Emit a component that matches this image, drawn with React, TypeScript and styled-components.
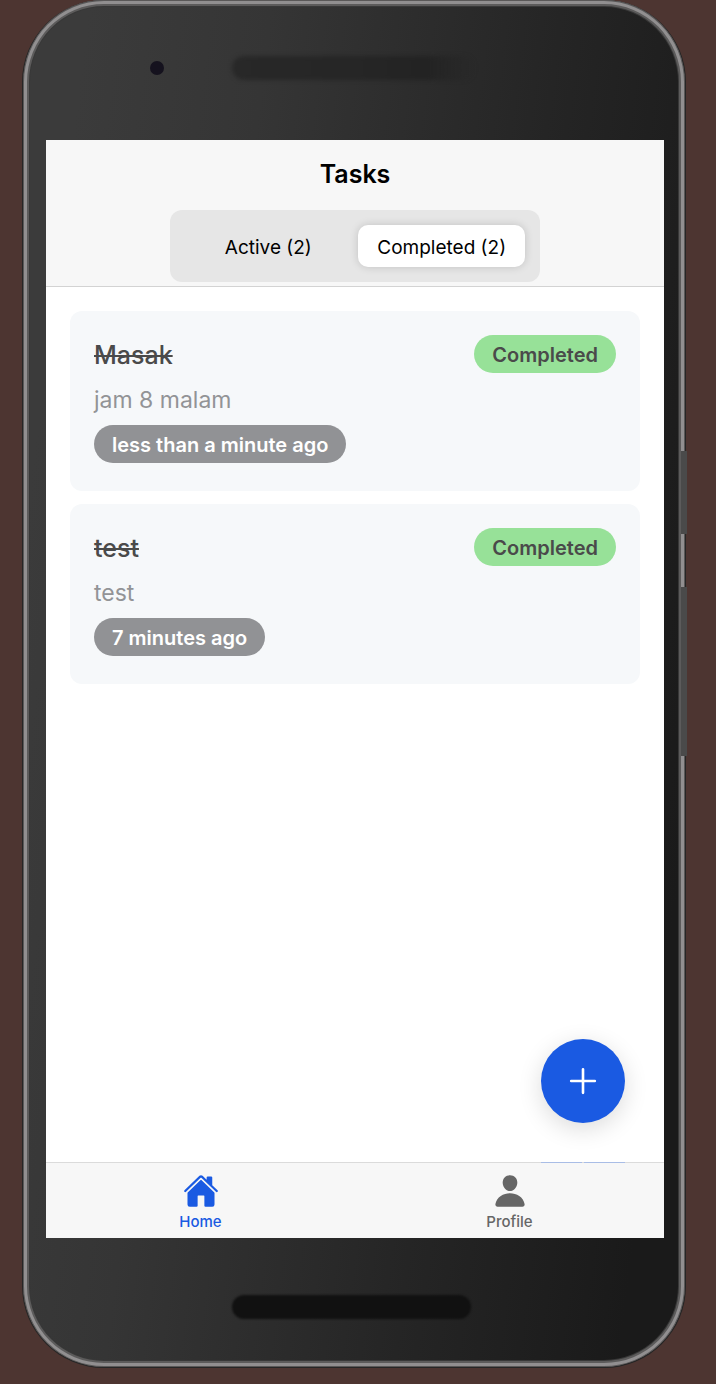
import React, { useState } from "react";
import styled, { createGlobalStyle } from "styled-components";
import { IoAdd, IoHome, IoPerson } from "react-icons/io5";

const GlobalStyle = createGlobalStyle`
  *, *::before, *::after { box-sizing: border-box; }
  body {
    margin: 0;
    background: #4d3531;
    font-family: Inter, "Liberation Sans", sans-serif;
    -webkit-font-smoothing: antialiased;
  }
  button { font: inherit; border: 0; cursor: pointer; }
  h1, h2, p, ul { margin: 0; padding: 0; }
`;

const Page = styled.div`
  display: flex;
  min-height: 100vh;
  padding: 0 30px 16px 22px;
`;

const Phone = styled.div`
  position: relative;
  flex: 1;
  display: flex;
  flex-direction: column;
  padding: 0 21px 0 23px;
  border: 1px solid #262626;
  border-top-width: 0;
  border-radius: 82px;
  background: linear-gradient(97deg, #3b3b3b 8%, #353535 30%, #252525 65%, #1a1a1a 92%);
  box-shadow: inset 0 0 0 1px #5a5858, inset 0 0 0 4px #918f90,
    inset 0 0 0 6px #5c5b5b, inset 0 0 0 7px #383838;
`;

const SideKey = styled.span<{ $top: number; $height: number }>`
  position: absolute;
  right: -2px;
  top: ${(p) => p.$top}px;
  width: 6px;
  height: ${(p) => p.$height}px;
  background: #4a4a4a;
`;

const TopBezel = styled.div`
  display: flex;
  align-items: center;
  gap: 68px;
  height: 140px;
  padding: 0 0 4px 104px;
`;

const Camera = styled.span`
  width: 14px;
  height: 14px;
  border-radius: 50%;
  background: #15121e;
`;

const Earpiece = styled.span`
  width: 244px;
  height: 24px;
  border-radius: 12px;
  background: linear-gradient(90deg, #282828, #262626 50%, #232323 80%, #24242400);
  filter: blur(2px);
`;

const BottomBezel = styled.div`
  display: flex;
  align-items: center;
  height: 129px;
  padding: 8px 0 0 186px;
`;

const Speaker = styled.span`
  width: 239px;
  height: 24px;
  border-radius: 12px;
  background: #111111;
  filter: blur(1px);
`;

const Screen = styled.div`
  position: relative;
  flex: 1;
  display: flex;
  flex-direction: column;
  background: #ffffff;
  color: #000000;
`;

const Header = styled.header`
  display: flex;
  flex-direction: column;
  align-items: center;
  padding-bottom: 4px;
  background: #f7f7f7;
  border-bottom: 1px solid #d3d3d3;
`;

const Title = styled.h1`
  padding: 18px 0 20px;
  font-size: 25px;
  line-height: 32px;
  font-weight: 600;
`;

const Segment = styled.div`
  display: grid;
  grid-template-columns: 1fr 1fr;
  gap: 6px;
  width: 60%;
  padding: 15px;
  border-radius: 12px;
  background: #e6e6e6;
`;

const SegmentButton = styled.button<{ $active: boolean }>`
  height: 42px;
  padding: 4px 0 0;
  border-radius: 10px;
  background: ${(p) => (p.$active ? "#ffffff" : "transparent")};
  box-shadow: ${(p) => (p.$active ? "0 0 8px rgba(0, 0, 0, 0.16)" : "none")};
  color: #000000;
  font-size: 19px;
  line-height: 38px;
  white-space: nowrap;
`;

const TaskList = styled.ul`
  flex: 1;
  display: flex;
  flex-direction: column;
  gap: 13px;
  padding: 24px;
  list-style: none;
`;

const TaskCard = styled.li`
  padding: 24px 24px 28px;
  border-radius: 12px;
  background: #f6f8fa;
`;

const TaskTop = styled.div`
  display: flex;
  align-items: center;
  justify-content: space-between;
`;

const TaskTitle = styled.h2`
  padding-top: 2px;
  color: #4a4a4a;
  font-size: 25px;
  line-height: 36px;
  font-weight: 500;
  text-decoration: line-through;
`;

const TaskNote = styled.p`
  padding: 12px 0 10px;
  color: #929396;
  font-size: 23px;
  line-height: 30px;
`;

const Badge = styled.span<{ $tone: "done" | "time" }>`
  display: block;
  width: fit-content;
  padding: 2px 18px 0;
  border-radius: 19px;
  background: ${(p) => (p.$tone === "done" ? "#97e198" : "#919295")};
  color: ${(p) => (p.$tone === "done" ? "#4a4a4a" : "#ffffff")};
  font-size: 20px;
  line-height: 36px;
  font-weight: 600;
  white-space: nowrap;
`;

const AddButton = styled.button`
  position: absolute;
  right: 39px;
  bottom: 115px;
  display: grid;
  place-items: center;
  width: 84px;
  height: 84px;
  padding: 0;
  border-radius: 50%;
  background: #1a5ae2;
  color: #ffffff;
  font-size: 42px;
  box-shadow: 0 6px 24px rgba(0, 0, 0, 0.14);
`;

const HiddenActions = styled.span`
  position: absolute;
  right: 39px;
  bottom: 75px;
  display: flex;
  gap: 2px;
  width: 84px;
  height: 1px;

  &::before,
  &::after {
    content: "";
    flex: 1;
    background: #a9bde6;
  }
`;

const TabBar = styled.nav`
  display: grid;
  grid-template-columns: 1fr 1fr;
  height: 76px;
  border-top: 1px solid #dbdbdb;
  background: #f7f7f7;
`;

const Tab = styled.a<{ $active?: boolean }>`
  display: flex;
  flex-direction: column;
  align-items: center;
  padding-top: 10px;
  color: ${(p) => (p.$active ? "#1a5ae2" : "#666666")};
  font-size: 15px;
  line-height: 26px;
  font-weight: 500;
  text-decoration: none;

  svg {
    width: 36px;
    height: 36px;
  }
`;

const tasks = [
  { title: "Masak", note: "jam 8 malam", time: "less than a minute ago" },
  { title: "test", note: "test", time: "7 minutes ago" },
];

export default function App() {
  const [filter, setFilter] = useState<"active" | "completed">("completed");

  return (
    <>
      <GlobalStyle />
      <Page>
        <Phone>
          <SideKey $top={451} $height={83} />
          <SideKey $top={587} $height={169} />
          <TopBezel>
            <Camera />
            <Earpiece />
          </TopBezel>
          <Screen>
            <Header>
              <Title>Tasks</Title>
              <Segment role="group" aria-label="Filter tasks">
                <SegmentButton
                  type="button"
                  aria-pressed={filter === "active"}
                  $active={filter === "active"}
                  onClick={() => setFilter("active")}
                >
                  Active (2)
                </SegmentButton>
                <SegmentButton
                  type="button"
                  aria-pressed={filter === "completed"}
                  $active={filter === "completed"}
                  onClick={() => setFilter("completed")}
                >
                  Completed (2)
                </SegmentButton>
              </Segment>
            </Header>
            <TaskList>
              {tasks.map((task) => (
                <TaskCard key={task.title}>
                  <TaskTop>
                    <TaskTitle>{task.title}</TaskTitle>
                    <Badge $tone="done">Completed</Badge>
                  </TaskTop>
                  <TaskNote>{task.note}</TaskNote>
                  <Badge $tone="time">{task.time}</Badge>
                </TaskCard>
              ))}
            </TaskList>
            <TabBar>
              <Tab href="#home" $active aria-current="page">
                <IoHome />
                Home
              </Tab>
              <Tab href="#profile">
                <IoPerson />
                Profile
              </Tab>
            </TabBar>
            <HiddenActions />
            <AddButton type="button" aria-label="Add task">
              <IoAdd />
            </AddButton>
          </Screen>
          <BottomBezel>
            <Speaker />
          </BottomBezel>
        </Phone>
      </Page>
    </>
  );
}
